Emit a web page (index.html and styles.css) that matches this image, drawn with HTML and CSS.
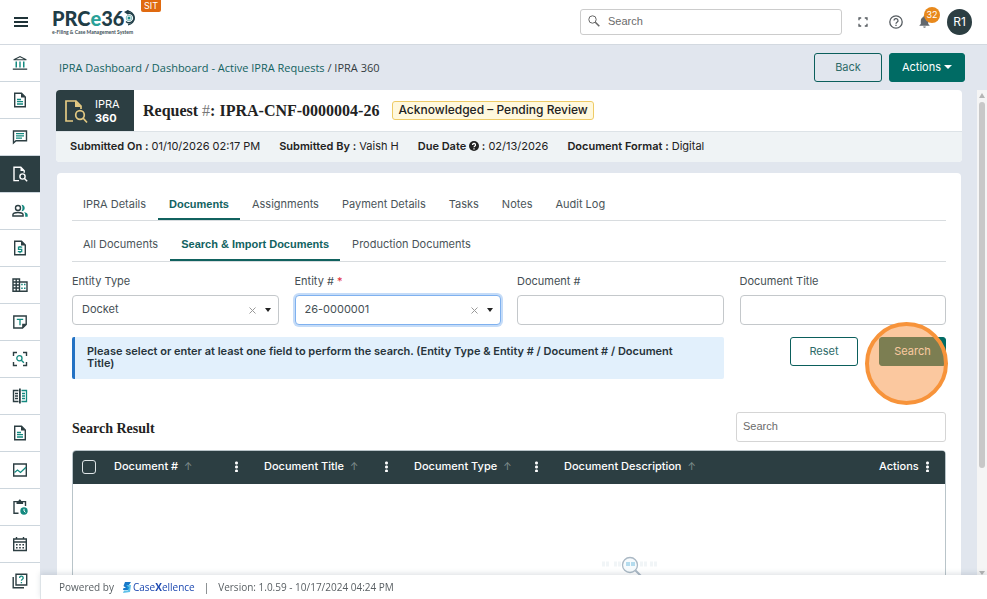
FILE: index.html
```html
<!DOCTYPE html>
<html lang="en">
<head>
  <meta charset="UTF-8">
  <meta name="viewport" content="width=device-width, initial-scale=1">
  <title>PRCe360 - IPRA 360</title>
  <link rel="stylesheet" href="styles.css">
</head>
<body>
  <header class="topbar">
    <button class="icon-btn menu-btn" type="button" aria-label="Menu">
      <svg width="14" height="12" viewBox="0 0 14 12"><path d="M0 2h14M0 6h14M0 10h14" stroke="#1f3338" stroke-width="2"/></svg>
    </button>
    <a class="logo" href="#">
      <span class="logo-name">PRC<span class="logo-e">e</span>36<svg width="13" height="18" viewBox="0 0 13 18" fill="none"><path d="M3 2.200a6.800 6.800 0 1 1 1 13.600" stroke="#1f3d47" stroke-width="1.200"/><path d="M3 4.800a4.700 4.700 0 1 1-1 7.700" stroke="#1f3d47" stroke-width="1.500"/><circle cx="5" cy="9" r="2.800" stroke="#7fb9bb" stroke-width="1"/><circle cx="5" cy="9" r="1.500" fill="#1f8f8a"/><path d="M0 3l4-2 2 2-3 2z" fill="#1f3d47"/></svg></span>
      <span class="logo-sub">e-Filing &amp; Case Management System</span>
    </a>
    <span class="env-tag">SIT</span>
    <label class="top-search">
      <svg width="12" height="12" viewBox="0 0 12 12" fill="none" stroke="#666"><circle cx="4.500" cy="4.500" r="3.700"/><path d="M7.300 7.300l4 4" stroke-width="1.600"/></svg>
      <input type="text" placeholder="Search" aria-label="Search">
    </label>
    <div class="top-icons">
      <button class="icon-btn" type="button" aria-label="Full screen">
        <svg width="10" height="10" viewBox="0 0 10 10" fill="none" stroke="#555b60" stroke-width="1.300"><path d="M1 3.200V1h2.200M6.800 1H9v2.200M9 6.800V9H6.800M3.200 9H1V6.800"/></svg>
      </button>
      <button class="icon-btn help-btn" type="button" aria-label="Help">
        <svg width="14" height="14" viewBox="0 0 14 14" fill="none" stroke="#555b60" stroke-width="1.300"><circle cx="7" cy="7" r="6.200"/><path d="M5 5.600a2 2 0 1 1 3 1.700c-.7.500-1 .8-1 1.500"/><path d="M7 9.800v1.300"/></svg>
      </button>
      <button class="icon-btn bell-btn" type="button" aria-label="Notifications">
        <svg width="11" height="13" viewBox="0 0 11 13" fill="#62686d"><path d="M5.500 0.500c.6 0 1 .4 1 1v.4C8.300 2.400 9.200 4 9.200 5.800V9l1.300 1.200v.6H.5v-.6L1.800 9V5.800C1.800 4 2.700 2.400 4.500 1.900v-.4c0-.6.4-1 1-1zM4.200 11.500h2.600a1.300 1.300 0 0 1-2.600 0z"/></svg>
        <span class="badge">32</span>
      </button>
      <button class="avatar" type="button">R1</button>
    </div>
  </header>

  <div class="shell">
    <nav class="sidebar" aria-label="Main">
      <a href="#" aria-label="Home"><svg viewBox="0 0 16 16"><path class="d" d="M1.500 5.200V4.300L8 1l6.500 3.300v.9zM4 4.200h8L8 2.200z" fill-rule="evenodd"/><path class="t" d="M3.500 6.500H5v6H3.500zM7.300 6.500h1.400v6H7.300zM11 6.500h1.500v6H11z"/><path class="d" d="M.8 13.500h14.400v1.300H.8z"/></svg></a>
      <a href="#" aria-label="Filings"><svg viewBox="0 0 16 16"><path class="ds" d="M2.700 1.200h6.800l3.800 3.800v9.800H2.700z"/><path class="d" d="M9 1l4.500 4.500H9z"/><path class="ts" d="M5 7.500h4M5 9.700h6M5 12h6"/></svg></a>
      <a href="#" aria-label="Messages"><svg viewBox="0 0 16 16"><path class="ds" d="M1.500 2h13v9.800H4L1.500 14z"/><path class="ts" d="M4 4.600h8M4 6.900h8M4 9.200h6"/></svg></a>
      <a class="active" href="#" aria-label="IPRA"><svg viewBox="0 0 16 16"><path class="ds" d="M7 14.600H2V1.200h6.800l3.400 3.600v2"/><path class="d" d="M8.500 1l4 4h-4z"/><circle class="ds" cx="10.500" cy="10.500" r="2.600"/><path class="ds" d="M12.400 12.400l2.800 2.800"/></svg></a>
      <a href="#" aria-label="People"><svg viewBox="0 0 16 16"><circle class="ds" cx="6" cy="5" r="2.500"/><path class="ds" d="M.9 13v-1.200C.9 10.200 4 9.500 6 9.500s5.100.7 5.100 2.300V13z"/><path class="t" d="M9.500 1.800c2 0 3.200 1.500 3.200 3.200S11.500 8.200 9.500 8.200c1.300-1.800 1.300-4.600 0-6.400zM12 8.900c2 .4 3.700 1.300 3.700 2.900v1.900h-2.500v-1.900c0-1.200-.4-2.200-1.200-2.900z"/></svg></a>
      <a href="#" aria-label="Payments"><svg viewBox="0 0 16 16"><path class="ds" d="M2.700 1.200h6.800l3.800 3.800v9.800H2.700z"/><path class="d" d="M9 1l4.500 4.500H9z"/><path class="ts" d="M10.200 7.200H6.500v2.200h3.200v2.300H5.800M8 6v1M8 12v1.200"/></svg></a>
      <a href="#" aria-label="Organizations"><svg viewBox="0 0 16 16"><path class="ds" d="M1 2h6.500v12.200H1zM7.500 5H15v9.200H7.500M1 5h6.500M1 8h6.500M1 11h6.500M4.200 2v12"/><path class="t" d="M9.200 6.800h1.500v1.500H9.200zM12 6.800h1.500v1.500H12zM9.200 10.500h1.500V12H9.200zM12 10.500h1.500V12H12z"/></svg></a>
      <a href="#" aria-label="Templates"><svg viewBox="0 0 16 16"><path class="ds" d="M1.800 2h12.400v8.500L10.500 14H1.800z"/><path class="d" d="M14.500 9.800V10l-4.300 4.300v-4.500z"/><path class="ts" d="M4.800 5.300h6.400M8 5.300v6"/></svg></a>
      <a href="#" aria-label="Scan"><svg viewBox="0 0 16 16"><path class="ds" d="M1.500 5V1.500H5M11 1.500h3.500V5M14.500 11v3.500H11M5 14.500H1.500V11"/><circle class="ts" cx="7.400" cy="7.200" r="2.600"/><path class="ts" d="M9.300 9.200l2.600 2.600"/></svg></a>
      <a href="#" aria-label="Compare"><svg viewBox="0 0 16 16"><path class="ds" d="M6.500 2.500h-5v11h5M3 5.500h3M3 8h3M3 10.500h3"/><path class="ts" d="M9.500 2.500h5v11h-5M10 5.500h3M10 8h3M10 10.500h3"/><path class="d" d="M7 .5h1.800v15H7z"/></svg></a>
      <a href="#" aria-label="Documents"><svg viewBox="0 0 16 16"><path class="ds" d="M2.700 1.200h6.800l3.800 3.800v9.800H2.700z"/><path class="d" d="M9 1l4.500 4.500H9z"/><path class="ts" d="M5 7.500h4M5 9.700h6M5 12h6"/></svg></a>
      <a href="#" aria-label="Reports"><svg viewBox="0 0 16 16"><path class="ds" d="M1.700 2h12.600v12H1.700z"/><path class="ts" d="M2.500 10.500L5.500 8l3 2.500L14 5.200"/></svg></a>
      <a href="#" aria-label="Pending tasks"><svg viewBox="0 0 16 16"><path class="ds" d="M6.500 14.300H2V2.600h11.500V7"/><path class="d" d="M4.500 2h2C6.700 1 7.200.5 7.800.5S9 1 9.200 2h1.900v3H4.500z"/><circle class="t" cx="12" cy="12" r="3.700"/><path d="M12 9.800V12l1.500 1.400" fill="none" stroke="#fff"/></svg></a>
      <a href="#" aria-label="Calendar"><svg viewBox="0 0 16 16"><path class="ds" d="M1.700 3h12.600v11.500H1.700zM1.700 6h12.600M4.500 1v2M11.500 1v2"/><path class="d" d="M4 8h1.600v1.500H4zM7.200 8h1.600v1.500H7.200zM10.400 8H12v1.500h-1.600zM4 11h1.600v1.500H4zM7.200 11h1.600v1.500H7.200zM10.400 11H12v1.500h-1.600z"/></svg></a>
      <a href="#" aria-label="Help center"><svg viewBox="0 0 16 16"><path class="ds" d="M4 1.300h10.700V12H4zM1.200 4v10.800H12"/><path class="ts" d="M7.600 5a1.800 1.800 0 1 1 2.600 1.500c-.6.400-.8.600-.8 1.300M9.400 9v1.300"/></svg></a>
    </nav>

    <div class="main">
      <div class="page-head">
        <div class="breadcrumb">
          <a href="#">IPRA Dashboard</a> / <a href="#">Dashboard - Active IPRA Requests</a> / <span>IPRA 360</span>
        </div>
        <button class="btn btn-outline" type="button">Back</button>
        <button class="btn btn-solid" type="button">Actions <span class="caret"></span></button>
      </div>

      <div class="scroll-row">
        <main class="scroll-area">
          <section class="request-card">
            <div class="request-top">
              <div class="request-mark">
                <svg width="24" height="26" viewBox="0 0 24 26" fill="none" stroke="#e3c983" stroke-width="1.700"><path d="M9 23H2V3h10l5 5v3"/><path d="M11 2.500l6.500 6.500H11z" fill="#e3c983" stroke="none"/><circle cx="16" cy="17" r="4.300"/><path d="M19 20l4 4.500"/></svg>
                <span>IPRA<br><b>360</b></span>
              </div>
              <h1>Request <span class="hash">#</span>: IPRA-CNF-0000004-26</h1>
              <span class="status">Acknowledged – Pending Review</span>
            </div>
            <div class="request-meta">
              <span><b>Submitted On :</b> 01/10/2026 02:17 PM</span>
              <span><b>Submitted By :</b> Vaish H</span>
              <span><b>Due Date <svg class="hint" width="10" height="10" viewBox="0 0 10 10"><circle cx="5" cy="5" r="5" fill="#222"/><path d="M3.500 4a1.500 1.500 0 1 1 2.200 1.300c-.5.300-.7.500-.7 1M5 7.200v1.200" fill="none" stroke="#fff" stroke-width="1.300"/></svg> :</b> 02/13/2026</span>
              <span><b>Document Format :</b> Digital</span>
            </div>
          </section>

          <section class="content-card">
            <nav class="tabs">
              <a href="#">IPRA Details</a>
              <a class="current" href="#">Documents</a>
              <a href="#">Assignments</a>
              <a href="#">Payment Details</a>
              <a href="#">Tasks</a>
              <a href="#">Notes</a>
              <a href="#">Audit Log</a>
            </nav>
            <nav class="tabs subtabs">
              <a href="#">All Documents</a>
              <a class="current" href="#">Search &amp; Import Documents</a>
              <a href="#">Production Documents</a>
            </nav>

            <form class="search-form">
              <div class="field">
                <label for="entityType">Entity Type</label>
                <div class="select-wrap">
                  <select id="entityType"><option>Docket</option></select>
                  <span class="select-icons"><svg width="7" height="7" viewBox="0 0 7 7"><path d="M.5.5l6 6M6.500.5l-6 6" stroke="#999"/></svg><span class="caret"></span></span>
                </div>
              </div>
              <div class="field">
                <label for="entityNo">Entity # <span class="req">*</span></label>
                <div class="select-wrap focused">
                  <select id="entityNo"><option>26-0000001</option></select>
                  <span class="select-icons"><svg width="7" height="7" viewBox="0 0 7 7"><path d="M.5.5l6 6M6.500.5l-6 6" stroke="#999"/></svg><span class="caret"></span></span>
                </div>
              </div>
              <div class="field">
                <label for="docNo">Document #</label>
                <input id="docNo" type="text">
              </div>
              <div class="field">
                <label for="docTitle">Document Title</label>
                <input id="docTitle" type="text">
              </div>
              <p class="notice">Please select or enter at least one field to perform the search. (Entity Type &amp; Entity # / Document # / Document Title)</p>
              <div class="form-actions">
                <button class="btn btn-outline" type="reset">Reset</button>
                <span class="click-target">
                  <button class="btn btn-solid" type="button">Search</button>
                  <span class="click-ring"></span>
                </span>
              </div>
            </form>

            <div class="result-head">
              <h2>Search Result</h2>
              <input type="text" placeholder="Search" aria-label="Search results">
            </div>
            <div class="table-wrap">
              <table>
                <thead>
                  <tr>
                    <th class="col-check"><input type="checkbox" aria-label="Select all"></th>
                    <th class="col-doc"><div class="th">Document # <i class="sort">↑</i><i class="dots"></i></div></th>
                    <th class="col-doc"><div class="th">Document Title <i class="sort">↑</i><i class="dots"></i></div></th>
                    <th class="col-doc"><div class="th">Document Type <i class="sort">↑</i><i class="dots"></i></div></th>
                    <th><div class="th">Document Description <i class="sort">↑</i></div></th>
                    <th class="col-actions"><div class="th">Actions <i class="dots"></i></div></th>
                  </tr>
                </thead>
                <tbody>
                  <tr>
                    <td class="empty" colspan="6">
                      <svg width="62" height="40" viewBox="0 0 62 40" fill="none"><path d="M2 9h8M14 9h8M40 9h8M50 9h8" stroke="#f1f5f7" stroke-width="5" stroke-dasharray="3 1"/><circle cx="30" cy="10" r="7.500" fill="#f7fbfd" stroke="#aab8c4" stroke-width="1.300"/><path d="M26 9h9" stroke="#b5dcee" stroke-width="4" stroke-dasharray="4 1"/><path d="M35.500 15.500L46 26" stroke="#aab8c4" stroke-width="2"/></svg>
                    </td>
                  </tr>
                </tbody>
              </table>
            </div>
          </section>
        </main>
        <div class="scrollbar"><span class="sb-up"></span><span class="sb-thumb"></span><span class="sb-down"></span></div>
      </div>

      <footer class="footer">
        <span>Powered by</span>
        <a class="brand" href="#"><svg width="8" height="11" viewBox="0 0 8 11"><path d="M2 0h6L6 3H3.500l3 2.500L5 8H0l.500-2H3L.500 4z" fill="#1878c8"/><path d="M3.500 3H8l-1 7-7 1 1-2.500h4z" fill="#19a7e0" opacity=".7"/></svg>Case<b>X</b>ellence</a>
        <span>|</span>
        <span>Version: 1.0.59 - 10/17/2024 04:24 PM</span>
      </footer>
    </div>
  </div>
</body>
</html>
```
FILE: styles.css
```css
* { box-sizing: border-box; }
body { margin: 0; height: 100vh; display: flex; flex-direction: column; overflow: hidden; font-family: Inter, "Open Sans", sans-serif; font-size: 11px; color: #333b40; background: #e1e6ee; }
a { color: inherit; text-decoration: none; }
button, input, select { font-family: inherit; font-size: 11px; }
b { font-weight: 700; color: #222; }

/* top bar */
.topbar { flex: none; height: 45px; display: flex; align-items: center; background: #fff; border-bottom: 1px solid #d3d9e0; padding: 0 15px 1px 0; }
.icon-btn { border: 0; background: none; padding: 0; display: flex; position: relative; }
.menu-btn { margin: 0 18px 0 14px; }
.logo { display: flex; flex-direction: column; gap: 1px; width: 86px; margin-left: 6px; }
.logo-name { display: flex; align-items: center; height: 20px; font-family: Lato, sans-serif; font-weight: 900; font-size: 20px; line-height: 20px; color: #1f3d47; }
.logo-name svg { flex: none; }
.logo-e { color: #2aa198; }
.logo-sub { font-family: Lato, sans-serif; font-size: 5px; line-height: 6px; font-weight: 700; color: #3d5058; white-space: nowrap; }
.env-tag { align-self: flex-start; width: 20px; height: 12px; margin-left: 3px; background: #e06a10; color: #fff; font-size: 9px; line-height: 11px; text-align: center; border-radius: 0 0 2px 2px; }
.top-search { display: flex; align-items: center; gap: 8px; width: 262px; height: 26px; margin-left: auto; padding: 0 7px 2px; border: 1px solid #ccc; border-radius: 3px; }
.top-search input { flex: 1; min-width: 0; border: 0; outline: 0; padding: 0; font-family: "Liberation Sans", sans-serif; }
::placeholder { color: #6b6b6b; opacity: 1; }
.top-icons { display: flex; align-items: center; margin-left: 16px; }
.help-btn { margin-left: 21px; }
.bell-btn { margin: 0 17px 0 16px; }
.badge { position: absolute; left: 5px; top: -8px; width: 16px; height: 16px; border-radius: 50%; background: #e8891c; color: #fff; font-size: 9px; line-height: 15px; text-align: center; }
.avatar { width: 25px; height: 26px; padding: 0; border: 0; border-radius: 50%; background: #2c3e42; color: #fff; font-size: 12px; }

/* left rail */
.shell { flex: 1; min-height: 0; display: flex; }
.sidebar { flex: none; width: 40px; background: #fff; overflow: hidden; }
.sidebar a { display: flex; align-items: center; justify-content: center; height: 37px; border-bottom: 1px solid #cdd6dd; }
.sidebar svg { width: 16px; height: 16px; }
.sidebar .active { background: #2c3e42; }
.d { fill: #2c3e42; }
.t { fill: #13897f; }
.ds { fill: none; stroke: #2c3e42; stroke-width: 1.4; }
.ts { fill: none; stroke: #13897f; stroke-width: 1.3; }
.active .d { fill: #fff; }
.active .ds { stroke: #fff; }

/* page */
.main { flex: 1; min-width: 0; display: flex; flex-direction: column; }
.page-head { flex: none; display: flex; align-items: center; height: 45px; padding: 0 22px 0 19px; }
.breadcrumb { margin-right: auto; padding-bottom: 1px; font-family: "Open Sans", sans-serif; }
.breadcrumb a { color: #11625f; }
.btn { height: 29px; border: 1px solid #0b5f5c; border-radius: 3px; padding: 0 0 2px; width: 68px; }
.btn-outline { background: none; color: #2d6b69; }
.btn-solid { background: #006b64; border-color: #006b64; color: #fff; }
.page-head .btn-solid { width: 76px; margin-left: 7px; }
.caret { display: inline-block; border: 4px solid transparent; border-top-color: currentColor; border-bottom: 0; vertical-align: 2px; }
.scroll-row { flex: 1; min-height: 0; display: flex; }
.scroll-area { flex: 1; min-width: 0; overflow: hidden; padding: 0 15px 0 16px; }
.scrollbar { flex: none; width: 10px; display: flex; flex-direction: column; align-items: center; background: #f5f5f5; }
.sb-up { margin: 3px 0 4px; border: 3px solid transparent; border-bottom: 5px solid #b5b5b5; border-top: 0; }
.sb-thumb { width: 6px; height: 366px; border-radius: 3px; background: #c8c8c8; }
.sb-down { margin-top: auto; border: 3px solid transparent; border-top: 4px solid #b5b5b5; border-bottom: 0; }

.request-card { border-radius: 4px; overflow: hidden; background: #fff; }
.request-top { display: flex; align-items: center; height: 41px; }
.request-mark { display: flex; align-items: center; gap: 7px; width: 78px; height: 41px; padding-left: 8px; background: #2c3e42; color: #fff; line-height: 14px; font-size: 11px; }
.request-mark b { color: #fff; }
h1 { margin: 0 13px 0 9px; font-family: "Liberation Serif", serif; font-size: 16px; color: #222; }
.hash { font-weight: 400; color: #777; }
.status { height: 19px; padding: 0 5px; border: 1px solid #eecb66; border-radius: 3px; background: #fff8dd; color: #222; font-size: 12px; font-weight: 500; line-height: 16px; }
.request-meta { display: flex; align-items: center; gap: 19px; height: 31px; padding: 0 14px 2px; background: #eff3f5; border-top: 1px solid #dde3e7; color: #222; white-space: nowrap; }
.request-meta b { font-weight: 600; }
.hint { vertical-align: -1px; }

.content-card { margin: 11px 1px 0; padding: 15px 15px 0; background: #fff; border-radius: 4px 4px 0 0; }
.tabs { display: flex; gap: 1px; height: 33px; border-bottom: 1px solid #d8dcdf; }
.tabs a { padding: 0 11px; line-height: 32px; white-space: nowrap; color: #4a5459; }
.tabs .current { font-family: "Liberation Sans", sans-serif; font-weight: 700; color: #11625f; border-bottom: 2px solid #11625f; }
.subtabs { margin-top: 8px; }
.subtabs a { line-height: 30px; }

.search-form { display: grid; grid-template-columns: repeat(4, 1fr); gap: 12px 16px; padding-top: 11px; }
.field label { display: block; line-height: 16px; margin-bottom: 6px; color: #454f54; }
.req { color: #e02b3c; }
.field input, .field select { display: block; width: 100%; height: 30px; padding: 0 9px 2px; border: 1px solid #c4c8cb; border-radius: 4px; background: #fff; color: #454f54; }
.field select { appearance: none; }
.select-wrap { position: relative; }
.select-icons { position: absolute; top: 0; right: 8px; height: 30px; display: flex; align-items: center; gap: 9px; color: #222; pointer-events: none; }
.select-icons .caret { border-width: 4px 3px 0; }
.focused select { border-color: #7fb1ef; box-shadow: 0 0 0 2px #c5dcf8; }
.notice { grid-column: span 3; margin: 0; height: 42px; padding: 8px 28px 8px 12px; border-left: 3px solid #2372c4; border-radius: 2px; background: #e2f0fc; color: #27343b; font-weight: 600; line-height: 12px; }
.form-actions { display: flex; justify-content: flex-end; align-items: flex-start; gap: 21px; }
.click-target { position: relative; display: flex; }
.click-target .btn { width: 67px; }
.click-ring { position: absolute; left: -14px; top: -15px; width: 83px; height: 83px; border: 4px solid #f7933a; border-radius: 50%; background: rgba(248, 146, 64, .5); pointer-events: none; }

.result-head { display: flex; align-items: center; justify-content: space-between; margin: 33px 0 8px; }
h2 { margin: 4px 0 0; font-family: "Liberation Serif", serif; font-size: 14px; color: #222; }
.result-head input { width: 210px; height: 30px; padding: 0 6px 3px; border: 1px solid #d5d5d5; border-radius: 3px; font-family: "Liberation Sans", sans-serif; }
.table-wrap { overflow: hidden; border: 1px solid #b9c4c9; border-radius: 4px 4px 0 0; }
table { width: 1116px; table-layout: fixed; border-collapse: collapse; }
th { height: 33px; padding: 0 10px 3px; background: #2c3e42; color: #fff; text-align: left; font-weight: 500; }
.col-check { width: 31px; padding: 0 0 1px 9px; }
.col-check input { appearance: none; display: block; width: 14px; height: 14px; margin: 0; border: 1px solid #dfe5e7; border-radius: 3px; }
.col-doc { width: 150px; }
.col-actions { position: sticky; right: 0; width: 76px; }
.th { display: flex; align-items: center; gap: 6px; white-space: nowrap; }
.sort { color: #82908f; font-style: normal; font-weight: 400; font-size: 10px; }
.dots { width: 3px; height: 11px; margin: 0 6px 0 auto; background: radial-gradient(circle, #fff 1px, transparent 2px) 0 0 / 3px 4px; }
.empty { padding: 71px 0 100px; text-align: center; }

.footer { flex: none; display: flex; align-items: center; gap: 9px; height: 24px; padding-left: 18px; background: #fff; border-left: 1px solid #dde3e7; box-shadow: 0 -2px 5px rgba(60, 80, 100, .15); position: relative; font-family: "Open Sans", sans-serif; font-size: 10px; color: #5a6064; }
.brand { display: flex; align-items: center; color: #1c48b0; }
.brand svg { margin-right: 2px; }
.brand b { color: #1c48b0; }
```
